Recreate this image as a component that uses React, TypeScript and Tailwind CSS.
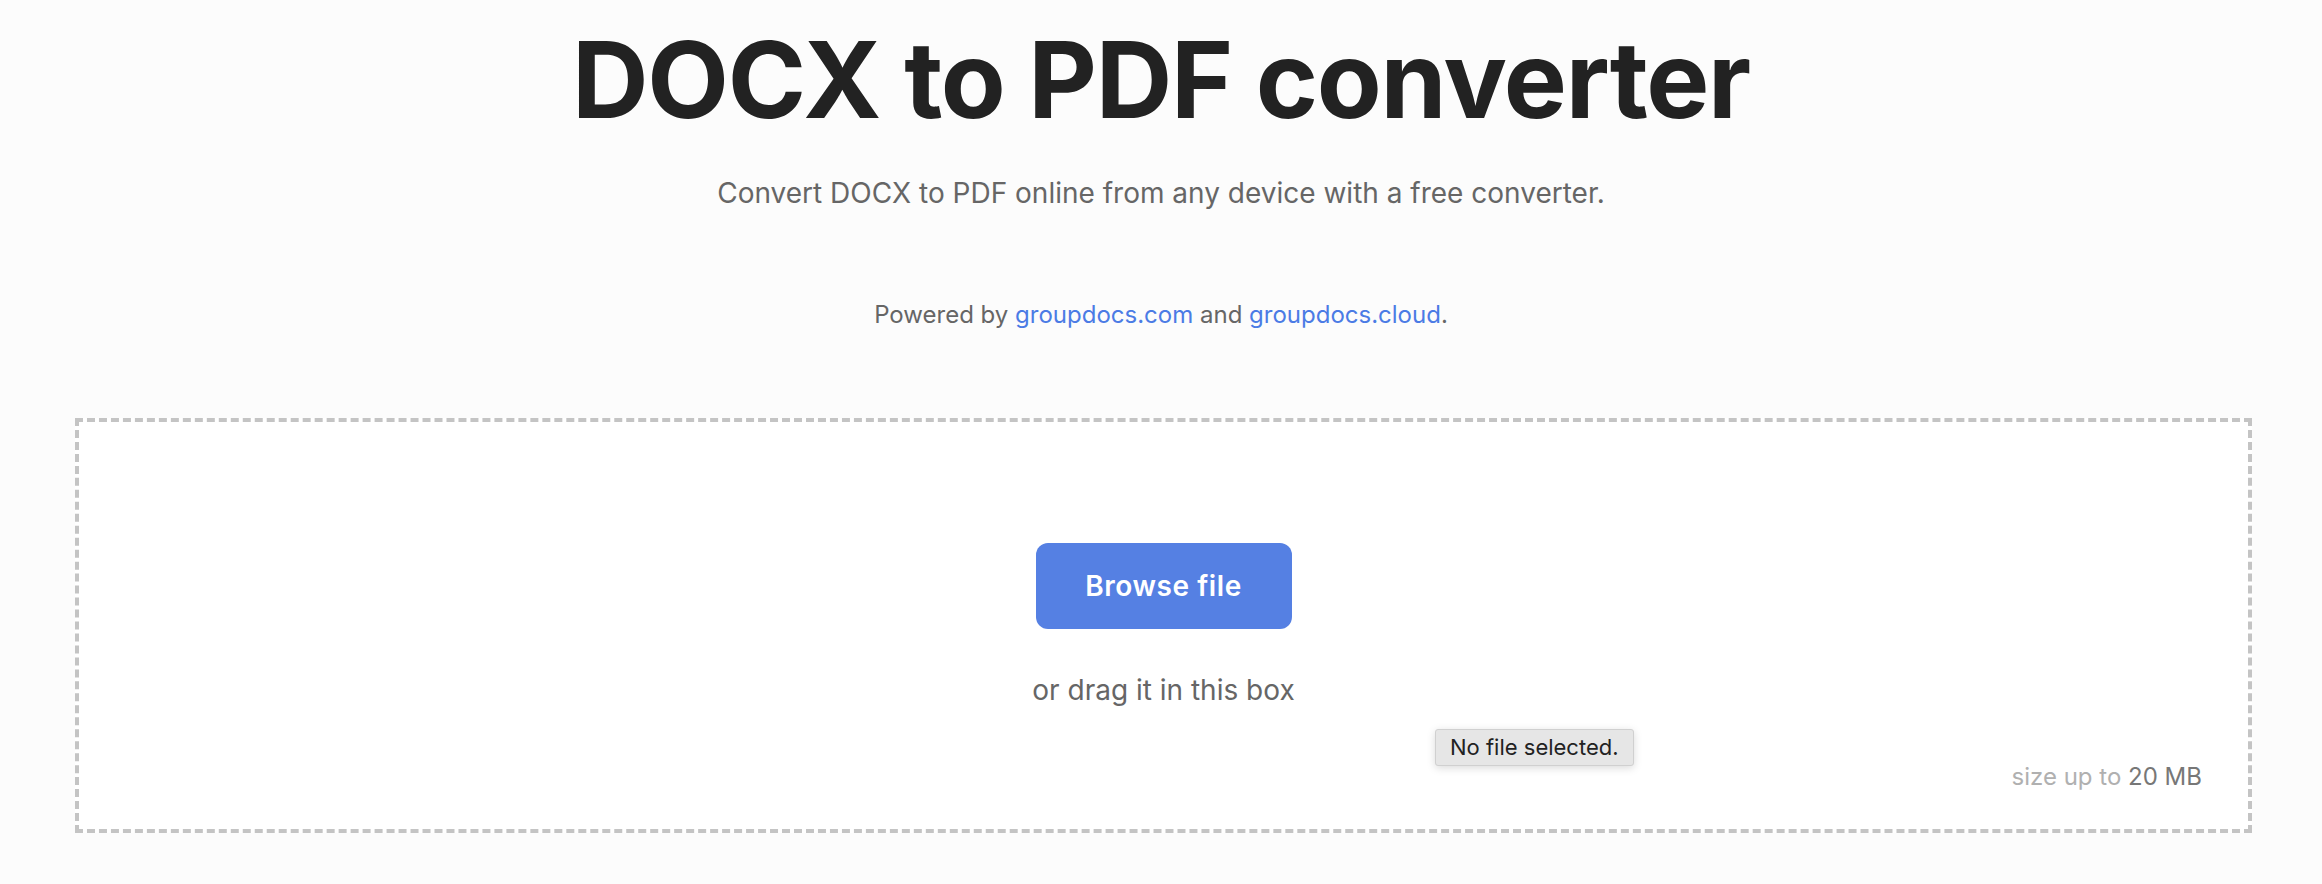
import React from 'react';

const App = () => {
  return (
    <div className="min-h-[884px] bg-[#fcfcfc] font-['Inter','Noto_Sans',sans-serif] text-[#222]">
      {/* Header */}
      <section className="flex flex-col items-center pt-[27px]">
        <h1 className="text-[106px] leading-none font-bold tracking-[-0.012em] text-[#222]">DOCX to PDF converter</h1>
        <p className="mt-[39px] text-[28px] leading-[42px] text-[#666]">
          Convert DOCX to PDF online from any device with a free converter.
        </p>
        <p className="mt-[83px] text-[24px] leading-[36px] text-[#666]">
          Powered by{' '}
          <a href="#" className="text-[#4b7be5]">groupdocs.com</a> and{' '}
          <a href="#" className="text-[#4b7be5]">groupdocs.cloud</a>.
        </p>
      </section>

      {/* Upload box */}
      <section className="pl-[75px] pr-[70px] pt-[85px]">
        <div className="relative flex flex-col items-center border-4 border-dashed border-[#c4c4c4] bg-white pt-[121px] pb-[34px]">
          <button className="h-[86px] w-[256px] rounded-[12px] bg-[#5580e3] text-[28px] font-semibold tracking-[0.02em] text-white">
            Browse file
          </button>
          <p className="mt-[40px] text-[28px] leading-[42px] text-[#666]">or drag it in this box</p>
          <div className="mt-[48px] self-end pr-[46px] text-[24px] leading-[36px] text-[#b0b0b0]">
            size up to <span className="text-[#777]">20 MB</span>
          </div>
          <div className="absolute left-[1356px] top-[307px] rounded-[3px] border border-[#d0d0d0] bg-[#e6e6e6] px-[14px] py-[4px] text-[22px] leading-[27px] text-[#222] shadow-[0_2px_8px_rgba(0,0,0,0.15)]">
            No file selected.
          </div>
        </div>
      </section>
    </div>
  );
};

export default App;
